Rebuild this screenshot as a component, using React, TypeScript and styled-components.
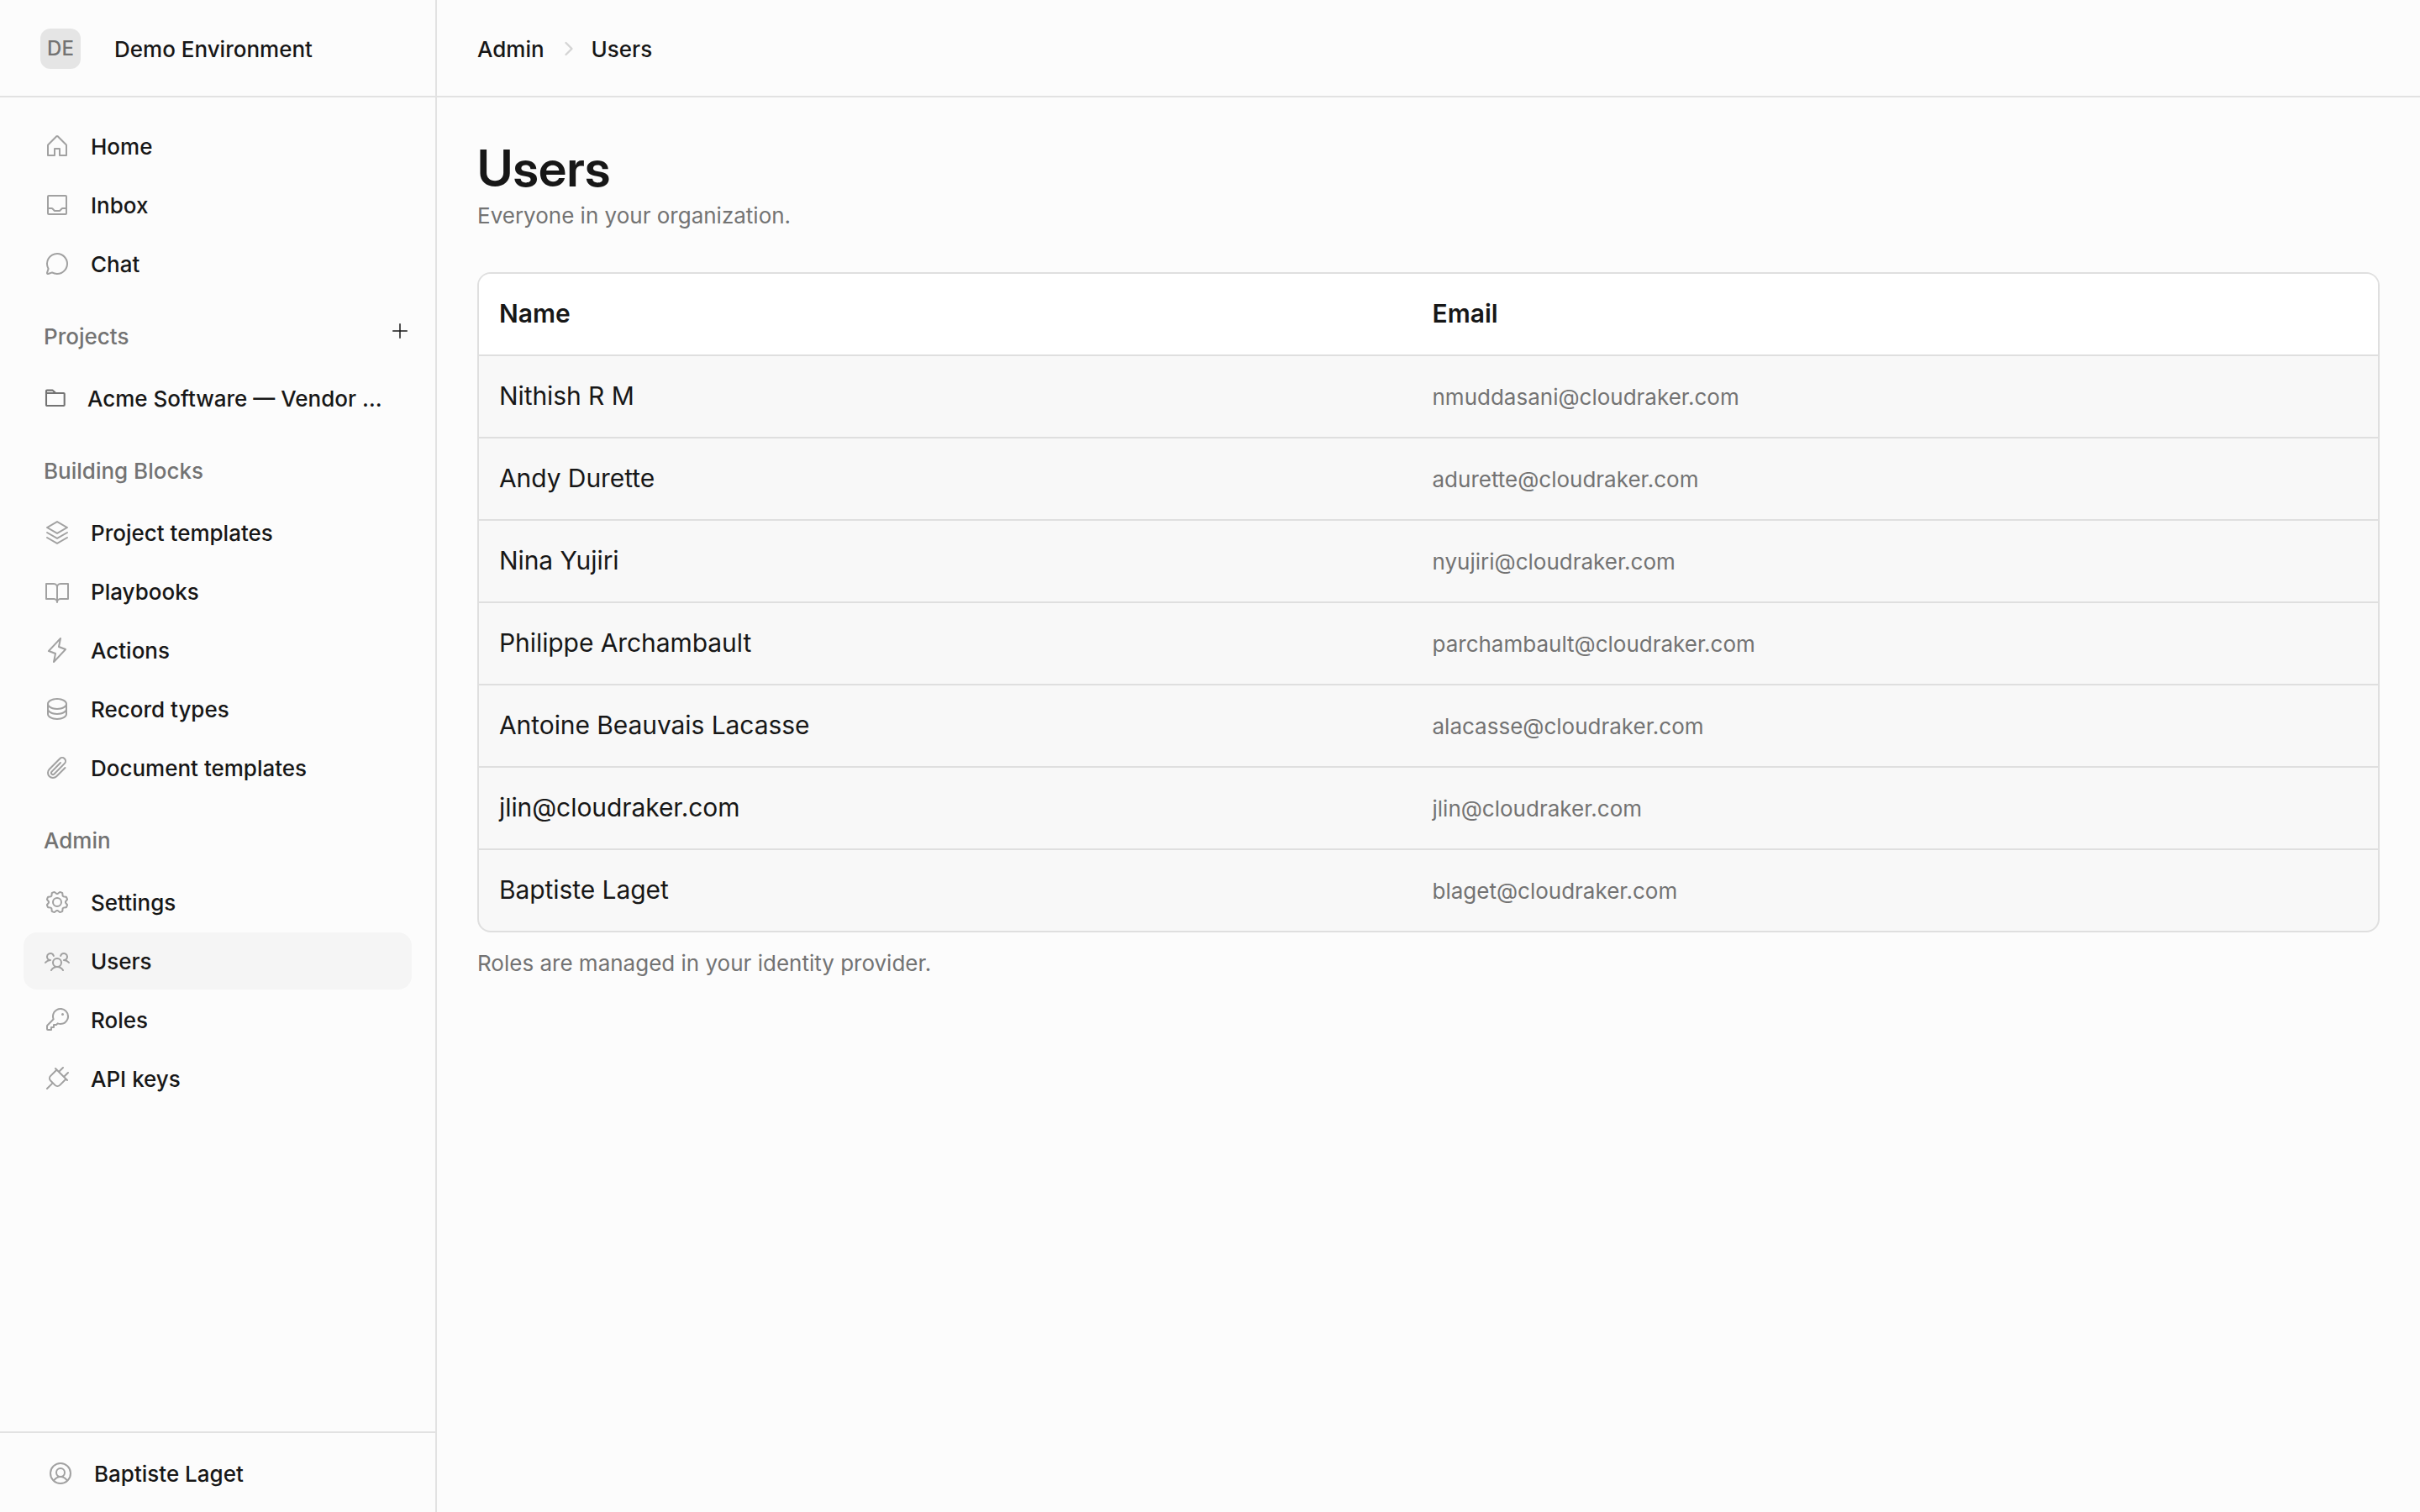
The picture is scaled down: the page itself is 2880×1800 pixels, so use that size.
import React from 'react';
import styled, { createGlobalStyle } from 'styled-components';
import type { IconType } from 'react-icons';
import {
  PiBookOpen,
  PiChatCircle,
  PiDatabase,
  PiGear,
  PiHouse,
  PiKey,
  PiLightning,
  PiPaperclip,
  PiPlug,
  PiPlus,
  PiStack,
  PiTray,
  PiUserCircle,
  PiUsersThree,
} from 'react-icons/pi';
import { ChevronRight } from 'lucide-react';

const color = {
  page: '#fcfcfc',
  line: '#e2e2e2',
  tableLine: '#dfdfdf',
  text: '#171717',
  muted: '#737373',
  icon: '#a1a1a1',
};

const GlobalStyle = createGlobalStyle`
  *, *::before, *::after { box-sizing: border-box; }
  body {
    margin: 0;
    background: ${color.page};
    color: ${color.text};
    font-family: Inter, "Liberation Sans", sans-serif;
    font-size: 30px;
    -webkit-font-smoothing: antialiased;
  }
  svg { display: block; flex: none; }
`;

const Shell = styled.div`
  display: grid;
  grid-template-columns: 520px minmax(0, 1fr);
  height: 100vh;
`;

const Sidebar = styled.aside`
  display: flex;
  flex-direction: column;
  border-right: 2px solid ${color.line};
  font-size: 26px;
  font-weight: 500;
`;

const Workspace = styled.div`
  display: flex;
  align-items: center;
  gap: 40px;
  height: 116px;
  padding: 2px 0 0 48px;
  border-bottom: 2px solid ${color.line};
`;

const Avatar = styled.span`
  display: grid;
  place-items: center;
  width: 48px;
  height: 48px;
  border-radius: 12px;
  background: #e5e5e5;
  color: ${color.muted};
  font-size: 24px;
  line-height: 48px;
`;

const Nav = styled.nav`
  flex: 1;
  display: flex;
  flex-direction: column;
  gap: 18px;
  padding: 24px 28px 0;
`;

const Section = styled.section`
  display: flex;
  flex-direction: column;
`;

const SectionHead = styled.div`
  display: flex;
  justify-content: space-between;
  height: 68px;
  margin-bottom: 6px;
  padding: 0 2px 0 24px;
  line-height: 70px;
  color: ${color.muted};
`;

const AddButton = styled.button`
  display: grid;
  place-items: center;
  width: 24px;
  height: 24px;
  margin: 16px 0 0;
  padding: 0;
  border: 0;
  background: none;
  color: ${color.text};
`;

const Items = styled.div`
  display: flex;
  flex-direction: column;
  gap: 2px;
`;

const Item = styled.a<{ $active?: boolean }>`
  display: flex;
  align-items: center;
  gap: 24px;
  height: 68px;
  padding: 0 24px;
  border-radius: 16px;
  background: ${(p) => (p.$active ? '#f5f5f5' : 'transparent')};
  svg { color: ${color.icon}; }
`;

const ProjectItem = styled(Item)`
  svg { color: ${color.muted}; }
`;

const Label = styled.span`
  min-width: 0;
  overflow: hidden;
  text-overflow: ellipsis;
  white-space: nowrap;
  line-height: 40px;
  padding-top: 1px;
`;

const Account = styled.div`
  display: flex;
  align-items: center;
  gap: 24px;
  height: 96px;
  padding: 2px 0 0 56px;
  border-top: 2px solid ${color.line};
  svg { color: ${color.icon}; }
`;

const Main = styled.main`
  display: flex;
  flex-direction: column;
`;

const Breadcrumb = styled.header`
  display: flex;
  align-items: center;
  gap: 15px;
  height: 116px;
  padding: 2px 0 0 48px;
  border-bottom: 2px solid ${color.line};
  font-size: 26px;
  font-weight: 500;
  svg {
    margin-right: -2px;
    color: #d4d4d4;
  }
`;

const Content = styled.div`
  padding: 48px 48px 0;
`;

const Title = styled.h1`
  margin: 0;
  font-family: "Inter Display", Inter, sans-serif;
  font-size: 60px;
  font-weight: 600;
  line-height: 72px;
  letter-spacing: 0.004em;
`;

const Hint = styled.p`
  margin: 0;
  font-size: 26px;
  line-height: 40px;
  color: ${color.muted};
`;

const Subtitle = styled(Hint)`
  margin-top: 1px;
`;

const Table = styled.div`
  margin: 47px 0 17px;
  overflow: hidden;
  border: 2px solid ${color.tableLine};
  border-radius: 16px;
  background: #f8f8f8;
`;

const Row = styled.div`
  display: grid;
  grid-template-columns: 1110.5px 1fr;
  align-items: baseline;
  height: 98px;
  padding-top: 25px;
  border-bottom: 2px solid ${color.tableLine};
  &:last-child { height: 96px; border-bottom: 0; }
`;

const HeadRow = styled(Row)`
  background: #fff;
  font-weight: 600;
`;

const Cell = styled.div`
  padding: 0 24px;
  line-height: 44px;
`;

const NameCell = styled(Cell)`
  letter-spacing: -0.0025em;
`;

const EmailCell = styled(Cell)`
  font-size: 26px;
  color: ${color.muted};
`;

type Entry = { label: string; icon: IconType; active?: boolean };

const general: Entry[] = [
  { label: 'Home', icon: PiHouse },
  { label: 'Inbox', icon: PiTray },
  { label: 'Chat', icon: PiChatCircle },
];

const blocks: Entry[] = [
  { label: 'Project templates', icon: PiStack },
  { label: 'Playbooks', icon: PiBookOpen },
  { label: 'Actions', icon: PiLightning },
  { label: 'Record types', icon: PiDatabase },
  { label: 'Document templates', icon: PiPaperclip },
];

const admin: Entry[] = [
  { label: 'Settings', icon: PiGear },
  { label: 'Users', icon: PiUsersThree, active: true },
  { label: 'Roles', icon: PiKey },
  { label: 'API keys', icon: PiPlug },
];

const users = [
  ['Nithish R M', 'nmuddasani@cloudraker.com'],
  ['Andy Durette', 'adurette@cloudraker.com'],
  ['Nina Yujiri', 'nyujiri@cloudraker.com'],
  ['Philippe Archambault', 'parchambault@cloudraker.com'],
  ['Antoine Beauvais Lacasse', 'alacasse@cloudraker.com'],
  ['jlin@cloudraker.com', 'jlin@cloudraker.com'],
  ['Baptiste Laget', 'blaget@cloudraker.com'],
];

function FolderIcon() {
  return (
    <svg
      width="28"
      height="28"
      viewBox="0 0 28 28"
      fill="none"
      stroke="currentColor"
      strokeWidth="2.1"
      strokeLinejoin="round"
    >
      <path d="M3 8V5.5a.9.9 0 0 1 .9-.9h6.5a.9.9 0 0 1 .6.3L14.3 8" />
      <path d="M3 8h20.8a.9.9 0 0 1 .9.9v13.2a.9.9 0 0 1-.9.9H3.9a.9.9 0 0 1-.9-.9z" />
    </svg>
  );
}

function NavItems({ entries }: { entries: Entry[] }) {
  return (
    <Items>
      {entries.map(({ label, icon: Icon, active }) => (
        <Item key={label} $active={active}>
          <Icon size={32} />
          <Label>{label}</Label>
        </Item>
      ))}
    </Items>
  );
}

export default function App() {
  return (
    <>
      <GlobalStyle />
      <Shell>
        <Sidebar>
          <Workspace>
            <Avatar>DE</Avatar>
            <Label>Demo Environment</Label>
          </Workspace>
          <Nav>
            <Section>
              <NavItems entries={general} />
            </Section>
            <Section>
              <SectionHead>
                Projects
                <AddButton aria-label="Add project">
                  <PiPlus size={24} />
                </AddButton>
              </SectionHead>
              <ProjectItem>
                <FolderIcon />
                <Label>Acme Software — Vendor …</Label>
              </ProjectItem>
            </Section>
            <Section>
              <SectionHead>Building Blocks</SectionHead>
              <NavItems entries={blocks} />
            </Section>
            <Section>
              <SectionHead>Admin</SectionHead>
              <NavItems entries={admin} />
            </Section>
          </Nav>
          <Account>
            <PiUserCircle size={32} />
            <Label>Baptiste Laget</Label>
          </Account>
        </Sidebar>
        <Main>
          <Breadcrumb>
            <Label>Admin</Label>
            <ChevronRight size={28} />
            <Label>Users</Label>
          </Breadcrumb>
          <Content>
            <Title>Users</Title>
            <Subtitle>Everyone in your organization.</Subtitle>
            <Table>
              <HeadRow>
                <Cell>Name</Cell>
                <Cell>Email</Cell>
              </HeadRow>
              {users.map(([name, email]) => (
                <Row key={name}>
                  <NameCell>{name}</NameCell>
                  <EmailCell>{email}</EmailCell>
                </Row>
              ))}
            </Table>
            <Hint>Roles are managed in your identity provider.</Hint>
          </Content>
        </Main>
      </Shell>
    </>
  );
}
